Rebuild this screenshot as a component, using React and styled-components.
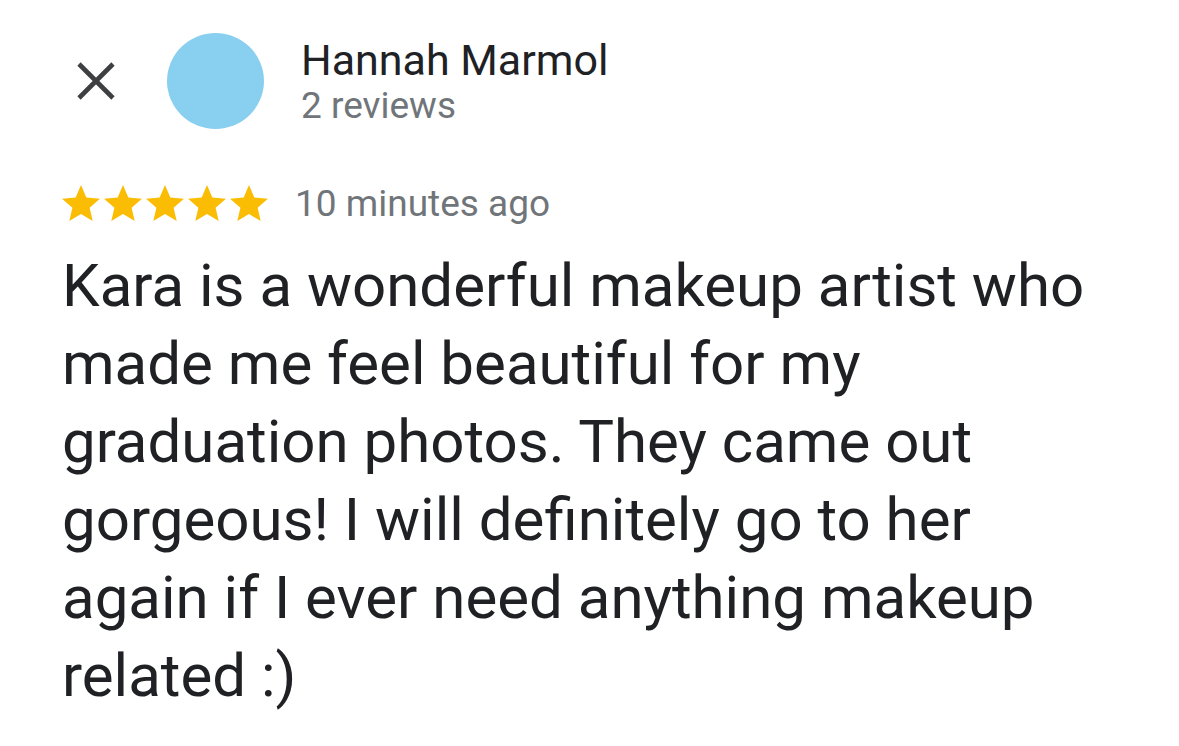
import React from 'react';
import styled, { createGlobalStyle } from 'styled-components';

const GlobalStyle = createGlobalStyle`
  html, body {
    margin: 0;
    padding: 0;
    background: #ffffff;
  }
  body {
    font-family: Roboto, "Liberation Sans", sans-serif;
  }
`;

const Sheet = styled.div`
  width: 1179px;
  height: 746px;
  box-sizing: border-box;
  padding: 33px 40px 0 62px;
  background: #ffffff;
  overflow: hidden;
`;

const Header = styled.div`
  display: flex;
  align-items: center;
  height: 96px;
`;

const CloseButton = styled.button`
  display: flex;
  align-items: center;
  justify-content: center;
  width: 38px;
  height: 38px;
  margin-left: 15px;
  padding: 0;
  border: none;
  background: transparent;
  cursor: pointer;
`;

const Avatar = styled.div`
  width: 97px;
  height: 96px;
  border-radius: 50%;
  background: #89cff0;
  margin-left: 52px;
  flex-shrink: 0;
`;

const Who = styled.div`
  display: flex;
  flex-direction: column;
  margin-left: 37px;
`;

const Name = styled.div`
  font-size: 43px;
  line-height: 48px;
  color: #202124;
`;

const Meta = styled.div`
  font-size: 37px;
  line-height: 43px;
  color: #70757a;
`;

const RatingRow = styled.div`
  display: flex;
  align-items: center;
  gap: 27px;
  margin-top: 52px;
  height: 44px;
`;

const Stars = styled.div`
  display: flex;
  gap: 4px;
`;

const Body = styled.p`
  margin: 22px 0 0;
  max-width: 1045px;
  font-size: 60px;
  line-height: 78px;
  color: #202124;
`;

const CloseIcon = () => (
  <svg width="38" height="38" viewBox="0 0 38 38">
    <path d="M2 2L36 36M36 2L2 36" stroke="#3c4043" strokeWidth="4.6" fill="none" />
  </svg>
);

const Star = () => (
  <svg width="38" height="36" viewBox="2 2 20 19">
    <path
      d="M12 17.27L18.18 21l-1.64-7.03L22 9.24l-7.19-.61L12 2 9.19 8.63 2 9.24l5.46 4.73L5.82 21z"
      fill="#fbbc04"
    />
  </svg>
);

export default function App() {
  return (
    <>
      <GlobalStyle />
      <Sheet>
        <Header>
          <CloseButton aria-label="Close">
            <CloseIcon />
          </CloseButton>
          <Avatar />
          <Who>
            <Name>Hannah Marmol</Name>
            <Meta>2 reviews</Meta>
          </Who>
        </Header>
        <RatingRow>
          <Stars>
            {[0, 1, 2, 3, 4].map((i) => (
              <Star key={i} />
            ))}
          </Stars>
          <Meta>10 minutes ago</Meta>
        </RatingRow>
        <Body>
          Kara is a wonderful makeup artist who made me feel beautiful for my graduation photos. They
          came out gorgeous! I will definitely go to her again if I ever need anything makeup related :)
        </Body>
      </Sheet>
    </>
  );
}
